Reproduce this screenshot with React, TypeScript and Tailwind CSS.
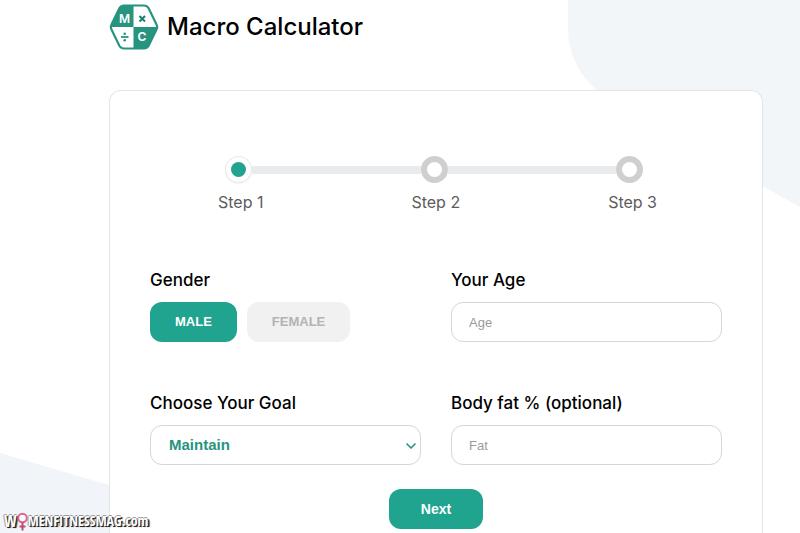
import { useState } from "react";
import { ChevronDown } from "lucide-react";

const steps = ["Step 1", "Step 2", "Step 3"];

const hexPath =
  "M15 1.500h20q3 0 4.500 2.500L47.500 20.500q1.300 2.500 0 5L39.500 42Q38 44.500 35 44.500H15q-3 0-4.500-2.500L2.500 25.500q-1.300-2.500 0-5L10.500 4Q12 1.500 15 1.500z";

function Logo() {
  return (
    <svg viewBox="0 0 50 46" className="h-[46px] w-[50px] shrink-0" aria-hidden="true">
      <defs>
        <clipPath id="hex">
          <path d={hexPath} />
        </clipPath>
      </defs>
      <g clipPath="url(#hex)">
        <rect width="50" height="46" fill="#fff" />
        <rect width="24.500" height="23" fill="#279480" />
        <rect x="24.500" y="23" width="26" height="23" fill="#279480" />
      </g>
      <path d={hexPath} fill="none" stroke="#279480" strokeWidth="2.200" />
      <text x="15.500" y="18.500" textAnchor="middle" fill="#fff" fontSize="12" fontWeight="600" fontFamily="Inter, sans-serif">
        M
      </text>
      <text x="33" y="36.500" textAnchor="middle" fill="#fff" fontSize="12" fontWeight="700" fontFamily="Inter, sans-serif">
        C
      </text>
      <path d="M30.500 12l5.500 5.500M36 12l-5.500 5.500" stroke="#1f7f6d" strokeWidth="2" />
      <path d="M12 33h7.500" stroke="#279480" strokeWidth="1.800" />
      <circle cx="15.700" cy="29.800" r="1.300" fill="#279480" />
      <circle cx="15.700" cy="36.200" r="1.300" fill="#279480" />
    </svg>
  );
}

function Backdrop() {
  return (
    <>
      <svg className="absolute right-0 top-0 h-[208px] w-[232px]" viewBox="0 0 232 208" aria-hidden="true">
        <path d="M0 0h232v207L48 104Q0 76 0 28z" fill="#f2f6f9" />
      </svg>
      <svg className="absolute bottom-0 left-0 h-20 w-[272px]" viewBox="0 0 272 80" aria-hidden="true">
        <path d="M0 0l272 80H0z" fill="#f1f4f8" />
      </svg>
    </>
  );
}

function Stepper({ current }: { current: number }) {
  return (
    <div>
      <div className="ml-[75px] mr-[79px] flex items-center">
        {steps.map((step, i) => (
          <div key={step} className={i > 0 ? "flex flex-1 items-center" : "flex items-center"}>
            {i > 0 && <div className="h-2 flex-1 bg-[#e8ecee]" />}
            {i === current ? (
              <div className="flex size-[27px] items-center justify-center rounded-full border border-[#e6e8e8] bg-white shadow-xs">
                <div className="size-[15px] rounded-full bg-[#20a38f]" />
              </div>
            ) : (
              <div className="size-[27px] rounded-full border-6 border-[#cfcfcf] bg-white" />
            )}
          </div>
        ))}
      </div>
      <ol className="ml-[68px] mr-[65px] mt-[7px] flex justify-between text-base leading-6 text-[#5c5c5c]">
        {steps.map((step) => (
          <li key={step}>{step}</li>
        ))}
      </ol>
    </div>
  );
}

function Watermark() {
  return (
    <div className="absolute bottom-0 left-1 flex items-center font-['Liberation_Sans_Narrow','Open_Sans_Condensed','Liberation_Sans',sans-serif] text-sm leading-6 text-white [text-shadow:1px_1px_0_#222,-1px_0_0_#999,0_-1px_0_#999,2px_1px_1px_#444]">
      <span className="text-base leading-6">W</span>
      <svg viewBox="0 0 11 20" className="h-5 w-[11px]" fill="none" aria-hidden="true">
        <circle cx="5.500" cy="7" r="4.300" fill="#fff" fillOpacity="0.500" stroke="#d9668a" strokeWidth="2" />
        <path d="M5.500 11.500v8M2.500 15.500h6" stroke="#c2486e" strokeWidth="2" />
      </svg>
      <span>MENFITNESSMAG.com</span>
    </div>
  );
}

const labelClass = "block text-[17px] leading-6 font-medium text-black";
const fieldClass =
  "mt-[10px] block h-10 w-full rounded-xl border border-[#d6d6d6] bg-white font-['Liberation_Sans',Arial,sans-serif] outline-none focus:border-[#20a38f]";

export default function App() {
  const [gender, setGender] = useState("male");
  const [goal, setGoal] = useState("maintain");
  const [age, setAge] = useState("");
  const [fat, setFat] = useState("");

  const genderClass = (value: string) =>
    gender === value ? "bg-[#20a38f] text-white" : "bg-[#f1f1f1] text-[#b3b3b3]";

  return (
    <div className="relative flex min-h-screen flex-col overflow-hidden bg-white pl-[109px] pr-[37px] font-[Inter,sans-serif]">
      <Backdrop />
      <header className="relative flex items-center gap-2 pt-1">
        <Logo />
        <h1 className="text-2xl font-medium text-black">Macro Calculator</h1>
      </header>

      <main className="relative mt-10 flex-1 rounded-t-xl border border-b-0 border-[#e1e5e7] bg-white px-10 pt-[65px] pb-1">
        <Stepper current={0} />

        <form onSubmit={(e) => e.preventDefault()}>
          <div className="mt-[54px] grid grid-cols-2 gap-x-[30px] gap-y-[49px]">
            <div role="group" aria-labelledby="gender">
              <span id="gender" className={labelClass}>
                Gender
              </span>
              <div className="mt-[10px] flex gap-[10px] font-['Liberation_Sans',Arial,sans-serif] text-[13px] font-bold">
                <button
                  type="button"
                  aria-pressed={gender === "male"}
                  onClick={() => setGender("male")}
                  className={`h-10 rounded-xl px-[25px] ${genderClass("male")}`}
                >
                  MALE
                </button>
                <button
                  type="button"
                  aria-pressed={gender === "female"}
                  onClick={() => setGender("female")}
                  className={`h-10 rounded-xl px-[25px] ${genderClass("female")}`}
                >
                  FEMALE
                </button>
              </div>
            </div>

            <div>
              <label htmlFor="age" className={labelClass}>
                Your Age
              </label>
              <input
                id="age"
                value={age}
                onChange={(e) => setAge(e.target.value)}
                placeholder="Age"
                className={`${fieldClass} px-[17px] text-[13px] placeholder:text-[#9b9b9b]`}
              />
            </div>

            <div>
              <label htmlFor="goal" className={labelClass}>
                Choose Your Goal
              </label>
              <div className="relative">
                <select
                  id="goal"
                  value={goal}
                  onChange={(e) => setGoal(e.target.value)}
                  className={`${fieldClass} appearance-none px-[18px] text-[15px] font-bold text-[#279480]`}
                >
                  <option value="maintain">Maintain</option>
                </select>
                <ChevronDown
                  className="pointer-events-none absolute top-[13px] right-[2px] size-4 text-[#279480]"
                  strokeWidth={2.5}
                />
              </div>
            </div>

            <div>
              <label htmlFor="fat" className={labelClass}>
                Body fat % (optional)
              </label>
              <input
                id="fat"
                value={fat}
                onChange={(e) => setFat(e.target.value)}
                placeholder="Fat"
                className={`${fieldClass} px-[17px] text-[13px] placeholder:text-[#9b9b9b]`}
              />
            </div>
          </div>

          <button
            type="submit"
            className="mx-auto mt-6 block h-10 rounded-xl bg-[#20a38f] px-8 font-['Liberation_Sans',Arial,sans-serif] text-sm font-bold text-white"
          >
            Next
          </button>
        </form>
      </main>

      <Watermark />
    </div>
  );
}
